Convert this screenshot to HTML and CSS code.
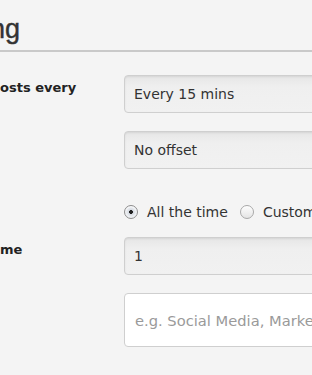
FILE: index.html
```html
<!DOCTYPE html>
<html lang="en">
  <head>
    <meta charset="UTF-8" />
    <meta name="viewport" content="width=device-width, initial-scale=1.0" />
    <title>Scheduling</title>
    <link rel="stylesheet" href="styles.css">
  </head>
  <body>
    <div class="heading"><span class="heading-text">ng</span></div>

    <form class="settings">
      <div class="row">
        <label class="label">osts every</label>
        <select class="field select">
          <option>Every 15 mins</option>
        </select>
      </div>
      <div class="row">
        <span class="label"></span>
        <select class="field select">
          <option>No offset</option>
        </select>
      </div>
      <div class="row radios">
        <span class="label"></span>
        <label class="choice"><input type="radio" name="when" checked> All the time</label>
        <label class="choice"><input type="radio" name="when"> Custom</label>
      </div>
      <div class="row">
        <label class="label">me</label>
        <select class="field select">
          <option>1</option>
        </select>
      </div>
      <div class="row">
        <span class="label"></span>
        <input class="field text" type="text" placeholder="e.g. Social Media, Marketing">
      </div>
    </form>
  </body>
</html>
```

FILE: styles.css
```css
body {
  margin: 0;
  padding: 0;
  background-color: #f4f4f4;
  font-family: "DejaVu Sans", "Liberation Sans", sans-serif;
  color: #333;
  overflow: hidden;
}
.heading {
  font-family: "Liberation Sans", sans-serif;
  font-size: 27px;
  line-height: 36px;
  color: #333;
  padding: 11px 0 3px;
  border-bottom: 2px solid #c9c9c9;
  white-space: nowrap;
}
.heading-text {
  display: inline-block;
  margin-left: -10px;
  -webkit-text-stroke: 0.4px #333;
}
.settings {
  padding-top: 23px;
}
.row {
  display: flex;
  margin-bottom: 18px;
  white-space: nowrap;
}
.label {
  flex: 0 0 124px;
  font-size: 13px;
  font-weight: bold;
  line-height: 18px;
  color: #222;
  padding-top: 4px;
}
.field {
  flex: 0 0 300px;
  box-sizing: border-box;
  margin: 0;
  font-family: "DejaVu Sans", "Liberation Sans", sans-serif;
  font-size: 14px;
  line-height: 20px;
  color: #333;
  border: 1px solid #cfcfcf;
  border-radius: 4px;
  outline: none;
}
.select {
  -webkit-appearance: none;
  appearance: none;
  height: 38px;
  padding: 8px 9px 8px;
  background: linear-gradient(#e6e6e6, #efefef 30%, #f1f1f1);
  box-shadow: inset 0 1px 2px rgba(0, 0, 0, 0.08);
}
.text {
  height: 54px;
  padding: 16px 10px;
  font-size: 14.7px;
  background-color: #fff;
}
.text::placeholder {
  color: #9a9a9a;
}
.radios {
  height: 50px;
  margin-bottom: 0;
  align-items: center;
}
.choice {
  display: flex;
  align-items: center;
  font-size: 14px;
  color: #333;
  margin-right: 12px;
}
.choice input {
  -webkit-appearance: none;
  appearance: none;
  width: 14px;
  height: 14px;
  margin: 0 9px 0 0;
  border: 1px solid #a8a8a8;
  border-radius: 50%;
  background: linear-gradient(#fdfdfd, #e4e4e4);
  box-shadow: inset 0 1px 1px rgba(255, 255, 255, 0.8);
}
.choice input:checked {
  background: radial-gradient(circle, #222 0, #222 1.6px, #d6dbe2 2.2px, #eef0f3 60%);
  border-color: #8d8d8d;
}
```
